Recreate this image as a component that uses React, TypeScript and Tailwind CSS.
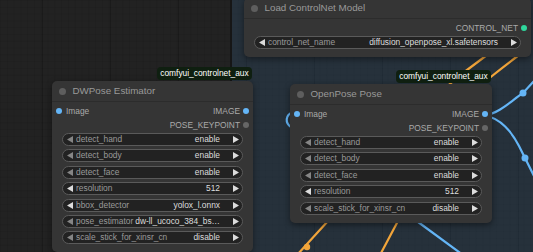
import React from 'react';

type Slot = { label: string; dot: string };
type Row = { input?: Slot; output?: Slot };
type Widget = { name: string; value: string; leftOn?: boolean };

const BLUE = 'bg-[#64b5f6]';
const GRAY = 'bg-[#666666]';
const GREEN = 'bg-[#2fd79c]';

const Tri = ({ dir, on, className }: { dir: 'l' | 'r'; on?: boolean; className?: string }) => (
  <svg width="6" height="7" viewBox="0 0 6 7" className={`shrink-0 ${className || ''}`}>
    <polygon points={dir === 'l' ? '6,0 6,7 0,3.5' : '0,0 0,7 6,3.5'} fill={on ? '#dcdcdc' : '#858585'} />
  </svg>
);

const SlotRow = ({ row }: { row: Row }) => (
  <div className="flex h-[14px] items-center justify-between text-[8.4px] text-[#aaaaaa]">
    <div className="flex items-center">
      {row.input && (
        <>
          <span className={`ml-[4px] h-[6px] w-[6px] rounded-full ${row.input.dot}`} />
          <span className="ml-[4px]">{row.input.label}</span>
        </>
      )}
    </div>
    <div className="flex items-center">
      {row.output && (
        <>
          <span>{row.output.label}</span>
          <span className={`ml-[3px] mr-[4px] h-[6px] w-[6px] rounded-full ${row.output.dot}`} />
        </>
      )}
    </div>
  </div>
);

const WidgetRow = ({ w }: { w: Widget }) => (
  <div className="flex h-[13px] items-center rounded-full border border-[#5a5a5a] bg-[#222222] text-[8.4px] leading-[11px]">
    <Tri dir="l" on={w.leftOn} className="ml-[4px]" />
    <span className="ml-[3px] min-w-0 flex-1 truncate text-[#9a9a9a]">{w.name}</span>
    <span className="whitespace-nowrap text-[#dddddd]">{w.value}</span>
    <Tri dir="r" on className="ml-[13px] mr-[3px]" />
  </div>
);

function Node({
  pos,
  title,
  rows,
  widgets,
  badge,
}: {
  pos: string;
  title: string;
  rows: Row[];
  widgets: Widget[];
  badge?: boolean;
}) {
  return (
    <div className={`absolute ${pos} rounded-[5px] bg-[#353535] pb-[8px] shadow-[0_2px_6px_rgba(0,0,0,0.45)]`}>
      {badge && (
        <div className="absolute bottom-full right-[1px] mb-[1.5px] flex h-[13px] w-[95px] items-center justify-center rounded-[4px] bg-[#0f1f10] text-[8.4px] leading-none text-white">
          comfyui_controlnet_aux
        </div>
      )}
      <div className="flex h-[21px] items-center border-b border-[#2c2c2c]">
        <span className="ml-[6.5px] h-[7px] w-[7px] rounded-full bg-[#5e5e5e]" />
        <span className="ml-[7px] text-[9.8px] text-[#999999]">{title}</span>
      </div>
      <div className="pt-[2px]">
        {rows.map((r, i) => (
          <SlotRow key={i} row={r} />
        ))}
      </div>
      <div className="mt-[1px] flex flex-col gap-[3.4px] px-[10px]">
        {widgets.map((w) => (
          <WidgetRow key={w.name} w={w} />
        ))}
      </div>
    </div>
  );
}

export default function App() {
  return (
    <div className="relative h-[252px] w-[533px] overflow-hidden bg-[#222222] font-['Liberation_Sans',Arial,sans-serif] [background-image:linear-gradient(to_right,rgba(0,0,0,0.22)_1px,transparent_1px),linear-gradient(to_right,rgba(0,0,0,0.07)_1px,transparent_1px),linear-gradient(to_bottom,rgba(0,0,0,0.07)_1px,transparent_1px)] [background-size:68px_68px,6.8px_6.8px,6.8px_6.8px] [background-position:42px_0,0_0,0_0]">
      {/* group area */}
      <div className="absolute bottom-0 left-[230px] right-0 top-0 border-l-2 border-[#161616] bg-[rgba(50,94,134,0.25)]" />

      {/* links */}
      <svg className="absolute inset-0" width="533" height="252" viewBox="0 0 533 252" fill="none">
        <g stroke="#f2a53a" strokeWidth="2.2" strokeLinecap="round">
          <path d="M297 255 L328 221" />
          <path d="M380 255 L398 221" />
          <path d="M445 88 Q466 70 487 55" />
          <path d="M487 80 Q503 67 519 55" />
        </g>
        <circle cx="307" cy="247" r="3.2" fill="#f2a53a" />
        <g stroke="#64b5f6" strokeWidth="2.2" strokeLinecap="round">
          <path d="M486 115 C500 113 512 100 523 93 L536 79" />
          <path d="M486 116 C500 118 512 132 519 146 L525 158 L536 180" />
          <path d="M414 219 L463 255" />
          <path d="M293 112 C285 115 285 123 291 127" />
        </g>
        <circle cx="523" cy="93" r="3.5" fill="#64b5f6" />
        <circle cx="525" cy="158" r="3.5" fill="#64b5f6" />
      </svg>

      <Node
        pos="left-[244px] top-[-2px] w-[287px]"
        title="Load ControlNet Model"
        rows={[{ output: { label: 'CONTROL_NET', dot: GREEN } }]}
        widgets={[{ name: 'control_net_name', value: 'diffusion_openpose_xl.safetensors', leftOn: true }]}
      />

      <Node
        pos="left-[52px] top-[81px] w-[201px]"
        title="DWPose Estimator"
        badge
        rows={[
          { input: { label: 'Image', dot: BLUE }, output: { label: 'IMAGE', dot: BLUE } },
          { output: { label: 'POSE_KEYPOINT', dot: GRAY } },
        ]}
        widgets={[
          { name: 'detect_hand', value: 'enable' },
          { name: 'detect_body', value: 'enable' },
          { name: 'detect_face', value: 'enable' },
          { name: 'resolution', value: '512', leftOn: true },
          { name: 'bbox_detector', value: 'yolox_l.onnx', leftOn: true },
          { name: 'pose_estimator', value: 'dw-ll_ucoco_384_bs…' },
          { name: 'scale_stick_for_xinsr_cn', value: 'disable' },
        ]}
      />

      <Node
        pos="left-[290px] top-[84px] w-[202px]"
        title="OpenPose Pose"
        badge
        rows={[
          { input: { label: 'Image', dot: BLUE }, output: { label: 'IMAGE', dot: BLUE } },
          { output: { label: 'POSE_KEYPOINT', dot: GRAY } },
        ]}
        widgets={[
          { name: 'detect_hand', value: 'enable' },
          { name: 'detect_body', value: 'enable' },
          { name: 'detect_face', value: 'enable' },
          { name: 'resolution', value: '512', leftOn: true },
          { name: 'scale_stick_for_xinsr_cn', value: 'disable' },
        ]}
      />
    </div>
  );
}
